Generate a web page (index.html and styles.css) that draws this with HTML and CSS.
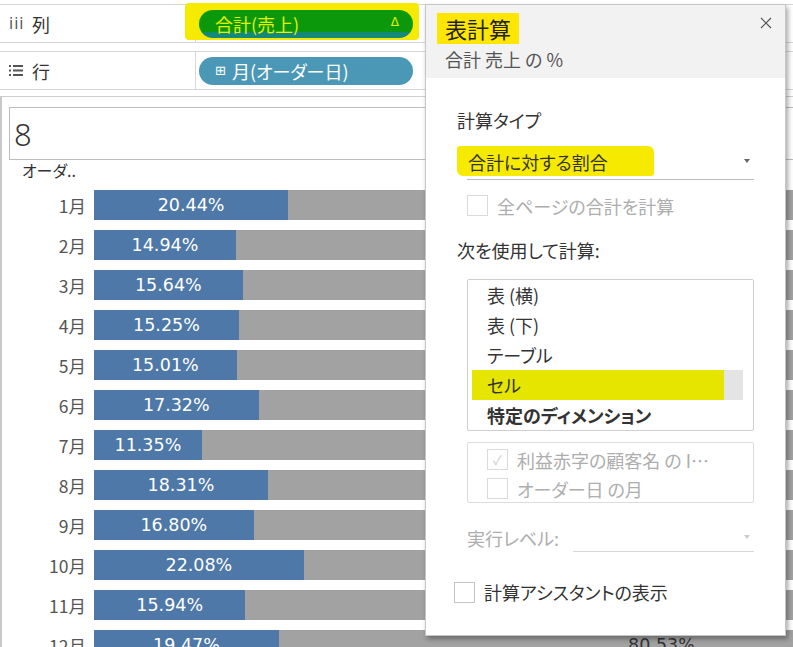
FILE: index.html
```html
<!DOCTYPE html>
<html lang="ja">
<head>
  <meta charset="UTF-8">
  <title>表計算</title>
  <link rel="stylesheet" href="styles.css">
</head>
<body>
  <div class="shelves">
    <div class="shelf">
      <div class="shelf-label">
        <span class="shelf-icon">iii</span>列
      </div>
      <div class="shelf-body">
        <span class="marker marker-pill"></span>
        <span class="pill pill-measure">合計(売上)<span class="delta">Δ</span></span>
      </div>
    </div>
    <div class="shelf">
      <div class="shelf-label">
        <svg class="shelf-icon rows-icon" width="14" height="11" viewBox="0 0 14 11">
          <rect x="0" y="0" width="2" height="2" fill="#555"/>
          <rect x="4" y="0" width="10" height="2" fill="#555"/>
          <rect x="0" y="4.5" width="2" height="2" fill="#555"/>
          <rect x="4" y="4.5" width="10" height="2" fill="#555"/>
          <rect x="0" y="9" width="2" height="2" fill="#555"/>
          <rect x="4" y="9" width="10" height="2" fill="#555"/>
        </svg>行
      </div>
      <div class="shelf-body">
        <span class="pill pill-dim"><span class="plus">⊞</span>月(オーダー日)</span>
      </div>
    </div>
  </div>

  <div class="view">
    <div class="view-title">8</div>
    <div class="axis-head">オーダ..</div>
    <div class="chart" id="chart"></div>
  </div>

  <div class="calc-dialog">
    <div class="dlg-head">
      <div class="dlg-title">表計算</div>
      <div class="dlg-sub">合計 売上 の %</div>
      <svg class="dlg-close" width="12" height="12" viewBox="0 0 12 12">
        <path d="M1 1 L11 11 M11 1 L1 11" stroke="#555" stroke-width="1.2" fill="none"/>
      </svg>
    </div>
    <div class="dlg-body">
      <div class="field-label">計算タイプ</div>
      <div class="select">
        <span class="marker marker-select"></span>
        <span class="select-text">合計に対する割合</span>
        <span class="caret"></span>
      </div>
      <label class="check disabled indent">
        <span class="box"></span>全ページの合計を計算
      </label>
      <div class="field-label gap-top">次を使用して計算:</div>
      <ul class="listbox">
        <li>表 (横)</li>
        <li>表 (下)</li>
        <li>テーブル</li>
        <li class="selected">セル</li>
        <li class="strong">特定のディメンション</li>
      </ul>
      <div class="dims">
        <label class="check disabled">
          <span class="box checked">✓</span>利益赤字の顧客名 の I…
        </label>
        <label class="check disabled">
          <span class="box"></span>オーダー日 の月
        </label>
      </div>
      <div class="level-row">
        <span class="level-label">実行レベル:</span>
        <span class="level-select"><span class="caret light"></span></span>
      </div>
      <label class="check assistant">
        <span class="box"></span>計算アシスタントの表示
      </label>
    </div>
  </div>

  <script>
    const months = [20.44, 14.94, 15.64, 15.25, 15.01, 17.32, 11.35, 18.31, 16.80, 22.08, 15.94, 19.47];
    const chart = document.getElementById('chart');

    months.forEach(function (pct, i) {
      const row = document.createElement('div');
      row.className = 'bar-row';
      const rest = (100 - pct).toFixed(2);
      row.innerHTML =
        '<span class="month">' + (i + 1) + '月</span>' +
        '<div class="bar">' +
          '<div class="seg seg-part" style="width:' + pct + '%">' + pct.toFixed(2) + '%</div>' +
          '<div class="seg seg-rest">' + rest + '%</div>' +
        '</div>';
      chart.appendChild(row);
    });
  </script>
</body>
</html>
```

FILE: styles.css
```css
* {
  box-sizing: border-box;
}
body {
  margin: 0;
  width: 793px;
  height: 647px;
  overflow: hidden;
  position: relative;
  background: #fff;
  color: #333;
  font-family: "Noto Sans CJK JP", "Noto Sans", sans-serif;
  font-feature-settings: "palt";
}

/* shelves */
.shelves {
  padding-top: 4px;
}
.shelf {
  display: grid;
  grid-template-columns: 196px 1fr;
  height: 39px;
  border-top: 1px solid #d6d6d6;
  border-bottom: 1px solid #d6d6d6;
}
.shelf + .shelf {
  margin-top: 8px;
}
.shelf-label {
  display: flex;
  align-items: center;
  padding-left: 9px;
  border-right: 1px solid #d6d6d6;
  font-size: 18px;
}
.shelf-icon {
  width: 23px;
  font-size: 15px;
  color: #555;
  font-family: "DejaVu Sans", sans-serif;
  letter-spacing: 1px;
}
.rows-icon {
  width: 14px;
  margin-right: 9px;
}
.shelf-body {
  position: relative;
  display: flex;
  align-items: center;
  padding-left: 3px;
}
.pill {
  position: relative;
  display: flex;
  align-items: center;
  width: 214px;
  height: 28px;
  border-radius: 14px;
  padding-left: 16px;
  font-size: 18px;
  color: #fff;
}
.pill-measure {
  background: linear-gradient(#0b990b 0 80%, #13897a 80%);
  color: #e4f000;
}
.delta {
  position: absolute;
  right: 14px;
  top: 5px;
  font-size: 12px;
  font-family: "DejaVu Sans", sans-serif;
}
.pill-dim {
  background: #4b98b6;
}
.plus {
  font-size: 13px;
  margin-right: 6px;
  font-family: "DejaVu Sans", sans-serif;
}
.marker {
  position: absolute;
  background: #f6ea00;
  border-radius: 4px;
}
.marker-pill {
  left: -11px;
  top: -2px;
  width: 234px;
  height: 37px;
}

/* view */
.view {
  margin-top: 6px;
  height: 560px;
  padding: 10px 0 0 7px;
  border-top: 1px solid #cfcfcf;
  border-left: 2px solid #c8c8c8;
}
.view-title {
  display: flex;
  align-items: center;
  height: 53px;
  padding-left: 4px;
  border: 1px solid #bdbdbd;
  border-right: none;
  font-family: "Noto Sans", sans-serif;
  font-weight: 300;
  font-size: 31px;
}
.axis-head {
  height: 30px;
  padding-left: 13px;
  font-size: 16px;
  line-height: 20px;
}
.chart {
  width: 1100px;
}
.bar-row {
  display: flex;
  align-items: center;
  height: 30px;
  margin-bottom: 10px;
}
.month {
  width: 85px;
  padding-right: 8px;
  text-align: right;
  font-size: 17.5px;
  color: #555;
}
.bar {
  display: flex;
  width: 950px;
  height: 30px;
  font-family: "DejaVu Sans", sans-serif;
  font-size: 17.5px;
}
.seg {
  display: flex;
  align-items: center;
  justify-content: center;
}
.seg-part {
  background: #4e78a7;
  color: #fff;
}
.seg-rest {
  flex: 1;
  background: #a2a2a2;
  color: #333;
}

/* calculation dialog */
.calc-dialog {
  position: absolute;
  left: 425px;
  top: 4px;
  width: 361px;
  height: 632px;
  background: #fff;
  border: 1px solid #c6c6c6;
  box-shadow: 2px 3px 5px rgba(0, 0, 0, 0.35);
}
.dlg-head {
  position: relative;
  height: 73px;
  padding: 8px 0 0 11px;
  background: #f2f2f2;
}
.dlg-title {
  display: inline-block;
  padding: 0 8px;
  background: #ffe600;
  font-size: 22px;
  line-height: 31px;
  color: #222;
}
.dlg-sub {
  margin: 3px 0 0 8px;
  font-size: 18px;
  line-height: 24px;
  color: #555;
}
.dlg-close {
  position: absolute;
  right: 13px;
  top: 12px;
}
.dlg-body {
  padding-left: 31px;
  font-size: 18px;
}
.field-label {
  margin-top: 30px;
  line-height: 24px;
}
.field-label.gap-top {
  margin-top: 18px;
}
.select {
  position: relative;
  display: flex;
  align-items: center;
  width: 287px;
  height: 36px;
  margin: 12px 0 0 10px;
  border-bottom: 1px solid #bbb;
}
.marker-select {
  left: -10px;
  top: 2px;
  width: 197px;
  height: 30px;
  border-radius: 3px 6px 3px 6px;
}
.select-text {
  position: relative;
  padding-left: 1px;
}
.caret {
  position: absolute;
  right: 4px;
  top: 15px;
  border-left: 3.5px solid transparent;
  border-right: 3.5px solid transparent;
  border-top: 4px solid #666;
}
.caret.light {
  border-top-color: #ccc;
}
.check {
  display: flex;
  align-items: center;
  height: 29px;
}
.check .box {
  display: flex;
  align-items: center;
  justify-content: center;
  width: 21px;
  height: 21px;
  margin-right: 9px;
  border: 1px solid #c4c4c4;
  background: #fff;
  font-size: 13px;
  color: #ccc;
}
.check.disabled {
  color: #adadad;
}
.check.disabled .box {
  border-color: #dadada;
}
.indent {
  margin: 11px 0 0 10px;
  height: 29px;
}
.listbox {
  list-style: none;
  width: 287px;
  height: 152px;
  margin: 17px 0 0 10px;
  padding: 0;
  border: 1px solid #cfcfcf;
  border-radius: 2px;
}
.listbox li {
  height: 30px;
  line-height: 30px;
  padding-left: 19px;
}
.listbox li.selected {
  margin: 0 10px 0 4px;
  padding-left: 15px;
  background: linear-gradient(to right, #e5e500 0 252px, #e4e4e4 252px);
}
.listbox li.strong {
  font-weight: bold;
}
.dims {
  width: 287px;
  height: 61px;
  margin: 11px 0 0 10px;
  padding: 2px 0 0 19px;
  border: 1px solid #dcdcdc;
  border-radius: 2px;
}
.level-row {
  display: flex;
  align-items: flex-end;
  height: 32px;
  margin: 19px 0 0 10px;
}
.level-label {
  width: 106px;
  line-height: 32px;
  color: #adadad;
}
.level-select {
  position: relative;
  width: 181px;
  height: 30px;
  margin-bottom: 2px;
  border-bottom: 1px solid #d6d6d6;
}
.level-select .caret {
  top: 13px;
}
.assistant {
  margin: 26px 0 0 -3px;
  height: 24px;
  color: #333;
}
.assistant .box {
  border-color: #c4c4c4;
}
```
